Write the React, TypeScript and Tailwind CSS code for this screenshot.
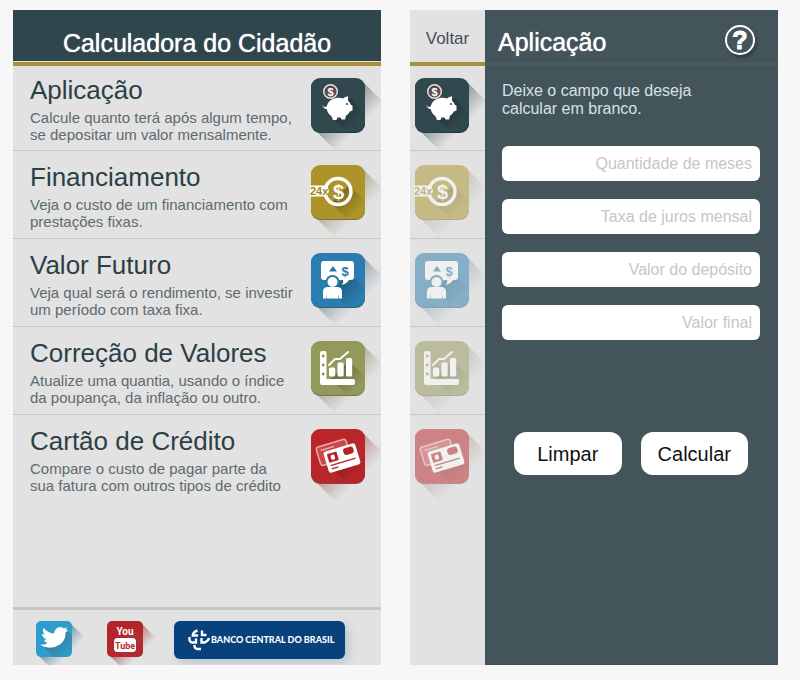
import type { ReactNode } from "react";

const FONT = "font-['Liberation_Sans',Arial,sans-serif]";

type TileProps = { id: string; color: string; shade: string; faded?: boolean; children: ReactNode };

function Tile({ id, color, shade, faded = false, children }: TileProps) {
  return (
    <svg
      viewBox="0 0 54 54"
      className={`h-[54px] w-[54px] shrink-0 overflow-visible ${faded ? "opacity-50" : ""}`}
      aria-hidden="true"
    >
      <defs>
        <linearGradient id={`${id}-long`} gradientUnits="userSpaceOnUse" x1="27" y1="27" x2="49" y2="49">
          <stop offset="0" stopColor={shade} stopOpacity="0.5" />
          <stop offset="1" stopColor={shade} stopOpacity="0" />
        </linearGradient>
        <linearGradient id={`${id}-inner`} gradientUnits="userSpaceOnUse" x1="27" y1="27" x2="46" y2="46">
          <stop offset="0" stopColor="#000" stopOpacity="0.3" />
          <stop offset="1" stopColor="#000" stopOpacity="0" />
        </linearGradient>
      </defs>
      <path d="M50 2 L76 28 V76 H28 L2 50Z" fill={`url(#${id}-long)`} />
      <rect y="1" width="54" height="54" rx="9" fill={shade} />
      <rect width="54" height="54" rx="9" fill={color} />
      <path d="M38 20 L54 36 V45 Q54 54 45 54 H36 L20 38Z" fill={`url(#${id}-inner)`} />
      {children}
    </svg>
  );
}

function PiggyArt() {
  return (
    <>
      <path
        d="M11.500 27 Q13 30 15.500 28.500 Q17.500 21 26 19.800 Q29 19.400 32 20.600 Q34 18.600 37.200 18.200 L37 22.500 Q39 24.500 39.700 26.800 L41.500 27.500 V32.500 L38.800 33.500 Q37.500 36.500 35 37.800 L34 41.500 H30.500 L29.500 39.500 H26.500 L25.500 42 H22 L20.500 38.200 Q16.500 35.500 15.700 31 Q12.200 31 11.500 27Z"
        fill="#fff"
      />
      <circle cx="36" cy="26" r="1" fill="#30474c" />
      <circle cx="19.500" cy="13.500" r="6.800" fill="#5a4f50" stroke="#e9dedb" strokeWidth="1.500" />
      <text x="19.500" y="17.500" textAnchor="middle" fontSize="11" fontWeight="700" fill="#fff">$</text>
    </>
  );
}

function InstallmentArt() {
  return (
    <>
      <circle cx="27" cy="26.500" r="13" fill="none" stroke="#fff" strokeWidth="3.500" />
      <path d="M-1 20.500 H16 L18 26 L16 31.500 H-1Z" fill="#fff" />
      <text x="-1" y="30" fontSize="11" fontWeight="700" fill="#9c861f">24x</text>
      <text x="27.500" y="33.500" textAnchor="middle" fontSize="20" fontWeight="700" fill="#fff">$</text>
    </>
  );
}

function AdvisorArt() {
  return (
    <>
      <path d="M13 8 H40 Q43 8 43 11 V24 Q43 27 40 27 H38 Q36 31 30 32 Q33 30 32 27 H13 Q10 27 10 24 V11 Q10 8 13 8Z" fill="#fff" />
      <path d="M18 18.500 L22 13 L26 18.500Z" fill="#2a78a8" />
      <text x="34" y="22.500" textAnchor="middle" fontSize="13" fontWeight="700" fill="#2a78a8">$</text>
      <circle cx="21.500" cy="29" r="6" fill="#fff" stroke="#2a78a8" strokeWidth="2" />
      <path d="M12 45.500 V38.500 Q12 34 17 34 H26 Q31 34 31 38.500 V45.500 H28 V42.500 H27.500 V45.500 H15.500 V42.500 H15 V45.500Z" fill="#fff" />
    </>
  );
}

function ChartArt() {
  return (
    <>
      <path d="M11 10 H13.500 Q15.500 10 15.500 12 V38 H42.500 Q44 38 44 39.500 V42 Q44 44 42 44 H11 Q9 44 9 42 V12 Q9 10 11 10Z" fill="#fff" />
      <g fill="#8c9050">
        <circle cx="12.200" cy="15" r="1.400" />
        <circle cx="12.200" cy="24" r="1.400" />
        <circle cx="12.200" cy="33" r="1.400" />
      </g>
      <g fill="#fff">
        <rect x="18" y="26.500" width="6.200" height="9" rx="1.500" />
        <rect x="26.500" y="21.500" width="6.200" height="14" rx="1.500" />
        <rect x="35" y="17" width="6.200" height="18.500" rx="1.500" />
      </g>
      <path d="M18 24 L24 18 H29 L37 11" fill="none" stroke="#fff" strokeWidth="2" strokeLinecap="round" />
    </>
  );
}

function CardsArt() {
  return (
    <>
      <g transform="rotate(-17 22 24)">
        <rect x="7" y="14" width="31" height="19" rx="2.500" fill="#c9484b" stroke="#f0a9a9" strokeWidth="1.500" />
        <path d="M11 18 H25" stroke="#f0a9a9" strokeWidth="1.500" />
      </g>
      <g transform="rotate(-17 31 29)">
        <rect x="14.500" y="18" width="33" height="22" rx="2.500" fill="#fff" />
        <rect x="17.500" y="21" width="10" height="9" rx="1" fill="#b52428" />
        <rect x="20.500" y="23" width="4" height="5" rx="1.500" fill="#fff" />
        <rect x="34" y="20.500" width="10.500" height="7" rx="3" fill="#b52428" />
        <path d="M18 33 H44 M18 36.500 H25" stroke="#b52428" strokeWidth="1.300" />
      </g>
    </>
  );
}

type Item = { id: string; title: string; lines: [string, string]; color: string; shade: string; art: ReactNode };

const ITEMS: Item[] = [
  { id: "aplicacao", title: "Aplicação", lines: ["Calcule quanto terá após algum tempo,", "se depositar um valor mensalmente."], color: "#30484e", shade: "#263b40", art: <PiggyArt /> },
  { id: "financiamento", title: "Financiamento", lines: ["Veja o custo de um financiamento com", "prestações fixas."], color: "#ac9429", shade: "#7c7048", art: <InstallmentArt /> },
  { id: "futuro", title: "Valor Futuro", lines: ["Veja qual será o rendimento, se investir", "um período com taxa fixa."], color: "#2a7dae", shade: "#37617c", art: <AdvisorArt /> },
  { id: "correcao", title: "Correção de Valores", lines: ["Atualize uma quantia, usando o índice", "da poupança, da inflação ou outro."], color: "#93985b", shade: "#737654", art: <ChartArt /> },
  { id: "cartao", title: "Cartão de Crédito", lines: ["Compare o custo de pagar parte da", "sua fatura com outros tipos de crédito"], color: "#b8262a", shade: "#914043", art: <CardsArt /> },
];

const FIELDS = ["Quantidade de meses", "Taxa de juros mensal", "Valor do depósito", "Valor final"];

function rowClass(index: number) {
  if (index === 0) return "h-[85px] pt-3 border-b";
  return index === ITEMS.length - 1 ? "h-[88px] pt-3.5" : "h-[88px] pt-3.5 border-b";
}

function SocialTile({ id, color, shade, children }: TileProps) {
  return (
    <svg viewBox="0 0 36 36" className="h-9 w-9 overflow-visible" aria-hidden="true">
      <defs>
        <linearGradient id={`${id}-long`} gradientUnits="userSpaceOnUse" x1="18" y1="18" x2="33" y2="33">
          <stop offset="0" stopColor={shade} stopOpacity="0.7" />
          <stop offset="1" stopColor={shade} stopOpacity="0" />
        </linearGradient>
      </defs>
      <path d="M34 2 L54 22 V54 H22 L2 34Z" fill={`url(#${id}-long)`} />
      <rect width="36" height="36" rx="5" fill={color} />
      <path d="M31 10 L36 15 V31 Q36 36 31 36 H18 L6 24Z" fill={`url(#${id}-long)`} />
      {children}
    </svg>
  );
}

function HomeScreen() {
  return (
    <section className="flex min-w-0 flex-1 flex-col overflow-hidden bg-[#e2e2e2]">
      <header className="flex h-14 shrink-0 justify-center border-b-4 border-[#a8913a] bg-[#30464d] pt-[18px] shadow-[inset_0_-1px_#e4dfc9]">
        <h1 className="text-[25px] leading-[30px] text-white [text-shadow:0_0_1px_#fff]">Calculadora do Cidadão</h1>
      </header>
      <ul>
        {ITEMS.map((item, i) => (
          <li key={item.id} className={`flex justify-between border-[#c6c6c6] pl-[17px] pr-4 ${rowClass(i)}`}>
            <a href={`#${item.id}`} className="-mt-0.5 flex min-w-0 flex-1 flex-col gap-[5px] whitespace-nowrap">
              <h2 className="text-[26px] leading-7 text-[#2b3f46]">{item.title}</h2>
              <p className="text-[15px] leading-[17px] text-[#5d6a6f]">
                {item.lines[0]}
                <br />
                {item.lines[1]}
              </p>
            </a>
            <Tile id={`home-${item.id}`} color={item.color} shade={item.shade}>
              {item.art}
            </Tile>
          </li>
        ))}
      </ul>
      <footer className="mt-auto flex h-[58px] shrink-0 border-t-[3px] border-[#c5c5c5] pl-[23px] pt-[11px]">
        <a href="#twitter" aria-label="Twitter" className="mr-[35px] h-9">
          <SocialTile id="twitter" color="#2f9dcb" shade="#37718d">
            <path
              d="M3.500 23.500 Q8 24.500 11.500 22 Q8.500 21 8 18.500 Q9.500 19 10.500 18.300 Q6 16.500 6 12.800 Q7.500 13.600 8.800 13.500 Q5.800 10.500 7.500 7 Q12 12 18 12.500 Q19 6.500 24 6 Q26.500 6 28 7.500 L31 6.300 Q30.700 8.200 29.300 9.200 L32 8.700 Q31.500 10.500 29.500 11.500 Q30 19 24 23.500 Q14 30 3.500 23.500Z"
              fill="#fff"
            />
          </SocialTile>
        </a>
        <a href="#youtube" aria-label="YouTube" className="mr-[31px] h-9">
          <SocialTile id="youtube" color="#b3272c" shade="#a33c40">
            <g className="font-[Roboto,sans-serif]" textAnchor="middle" fontWeight="700">
              <text x="18" y="14" fontSize="10" fill="#fff">You</text>
              <rect x="7" y="17" width="22" height="14" rx="3.500" fill="#fff" />
              <text x="18" y="28" fontSize="9" fill="#b3272c">Tube</text>
            </g>
          </SocialTile>
        </a>
        <a href="#bcb" className="flex h-[38px] w-[171px] items-center rounded-md bg-[#07427c] pl-3.5 shadow-[4px_4px_10px_#bcc6d0]">
          <svg viewBox="0 0 22 22" className="h-[22px] w-[22px] shrink-0" fill="none" stroke="#fff" strokeWidth="2.400" aria-hidden="true">
            <path d="M9.500 1.500 Q5 3 4.800 6.500 H10" />
            <path d="M18.500 6 H14 V1.500" />
            <path d="M1.500 8 Q1 13.500 4.500 13.500 H8 V9.500" />
            <path d="M13.500 9 V13.500 H16.500 Q20 12.500 21 9" />
            <path d="M6.500 16 V17.500 Q7 20 10 20 H13" />
          </svg>
          <span className="whitespace-nowrap pl-px font-[Lato,sans-serif] text-[9px] font-black leading-4 text-white">
            BANCO CENTRAL DO BRASIL
          </span>
        </a>
      </footer>
    </section>
  );
}

function CalculatorScreen() {
  return (
    <section className="flex min-w-0 flex-1 overflow-hidden">
      <nav className="flex w-[75px] shrink-0 flex-col overflow-hidden bg-[#e2e2e2]">
        <a href="#voltar" className="flex h-14 shrink-0 justify-center border-b-4 border-[#a8913a] pt-[19px] text-[17px] leading-5 text-[#42515a]">
          Voltar
        </a>
        {ITEMS.map((item, i) => (
          <a key={item.id} href={`#${item.id}`} aria-label={item.title} className={`flex border-[#c6c6c6] pl-[5px] ${rowClass(i)}`}>
            <Tile id={`side-${item.id}`} color={item.color} shade={item.shade} faded={i > 0}>
              {item.art}
            </Tile>
          </a>
        ))}
      </nav>
      <div className="min-w-0 flex-1 bg-[#43555a]">
        <header className="flex h-14 justify-between border-b-4 border-[#4a595e] pl-[13px] pr-[23px]">
          <h1 className="pt-[17px] text-[25px] leading-[30px] text-white [text-shadow:0_0_1px_#fff]">Aplicação</h1>
          <button
            type="button"
            aria-label="Ajuda"
            className="mt-[15px] flex h-[30px] w-[30px] items-center justify-center rounded-full border-2 border-white text-[25px] font-bold leading-none text-white shadow-[2px_3px_3px_#2f4046] [-webkit-text-stroke:1px_#fff]"
          >
            ?
          </button>
        </header>
        <form className="pl-[17px] pr-[18px] pt-4" onSubmit={(e) => e.preventDefault()}>
          <p className="text-base leading-[18px] text-[#d6e3e5]">
            Deixe o campo que deseja
            <br />
            calcular em branco.
          </p>
          <div className="mt-7 flex flex-col gap-[18px]">
            {FIELDS.map((label) => (
              <input
                key={label}
                type="text"
                aria-label={label}
                placeholder={label}
                className="h-[35px] w-full rounded-md bg-white px-2 text-right text-base text-[#43555a] placeholder:text-[#c5c6c8]"
              />
            ))}
          </div>
          <div className="mt-[92px] grid grid-cols-2 gap-[19px] px-3">
            <button type="reset" className="h-[43px] rounded-xl bg-white text-xl text-[#111]">Limpar</button>
            <button type="submit" className="h-[43px] rounded-xl bg-white text-xl text-[#111]">Calcular</button>
          </div>
        </form>
      </div>
    </section>
  );
}

export default function App() {
  return (
    <main className={`flex min-h-screen gap-[29px] bg-[#f7f7f7] pb-[15px] pl-[13px] pr-[22px] pt-2.5 ${FONT}`}>
      <HomeScreen />
      <CalculatorScreen />
    </main>
  );
}
